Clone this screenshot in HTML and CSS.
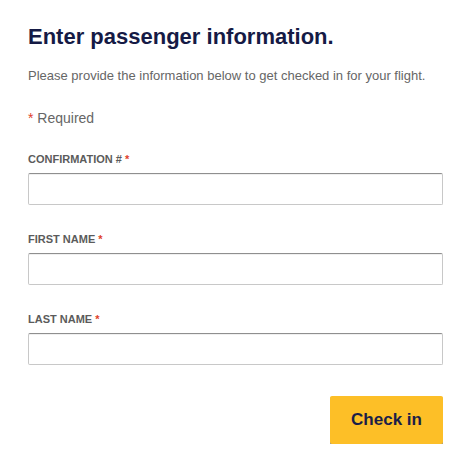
FILE: index.html
```html
<!DOCTYPE html>
<html lang="en">
<head>
  <meta charset="UTF-8" />
  <meta name="viewport" content="width=device-width, initial-scale=1.0" />
  <title>Check in</title>
  <link rel="stylesheet" href="styles.css">
</head>
<body>
  <form class="checkin">
    <h1>Enter passenger information.</h1>
    <p class="intro">Please provide the information below to get checked in for your flight.</p>
    <p class="required"><span class="star">*</span> Required</p>

    <div class="campo">
      <label for="conf">CONFIRMATION # <span class="star">*</span></label>
      <input type="text" id="conf" />
    </div>
    <div class="campo">
      <label for="first">FIRST NAME <span class="star">*</span></label>
      <input type="text" id="first" />
    </div>
    <div class="campo">
      <label for="last">LAST NAME <span class="star">*</span></label>
      <input type="text" id="last" />
    </div>

    <div class="acciones">
      <button type="button">Check in</button>
    </div>
  </form>
</body>
</html>
```

FILE: styles.css
```css
body {
  margin: 0;
  font-family: "Liberation Sans", Arial, sans-serif;
  background: #fff;
}
.checkin {
  width: 415px;
  padding: 24px 0 0 28px;
}
h1 {
  margin: 0;
  font-size: 22px;
  line-height: 26px;
  color: #151a45;
}
.intro {
  margin: 18px 0 0;
  font-size: 13px;
  line-height: 16px;
  color: #666;
}
.required {
  margin: 26px 0 0;
  font-size: 14px;
  line-height: 16px;
  color: #666;
}
.star {
  color: #e0412b;
}
.campo {
  margin-top: 26px;
}
.campo + .campo {
  margin-top: 27px;
}
label {
  display: block;
  font-size: 11px;
  font-weight: bold;
  line-height: 14px;
  color: #5b5b5b;
}
input {
  display: block;
  box-sizing: border-box;
  width: 100%;
  height: 32px;
  margin-top: 7px;
  border: 1px solid #c8c8c8;
  border-top-color: #8f8f8f;
  border-radius: 2px;
  box-shadow: inset 0 1px 0 #f0f0f0;
}
.acciones {
  display: flex;
  justify-content: flex-end;
  margin-top: 31px;
}
button {
  width: 113px;
  height: 48px;
  border: 0;
  border-radius: 2px;
  background: #fdbf27;
  box-shadow: 0 1px 0 #8d8d8d;
  font-family: inherit;
  font-size: 17px;
  font-weight: bold;
  color: #1b1e48;
}
```
